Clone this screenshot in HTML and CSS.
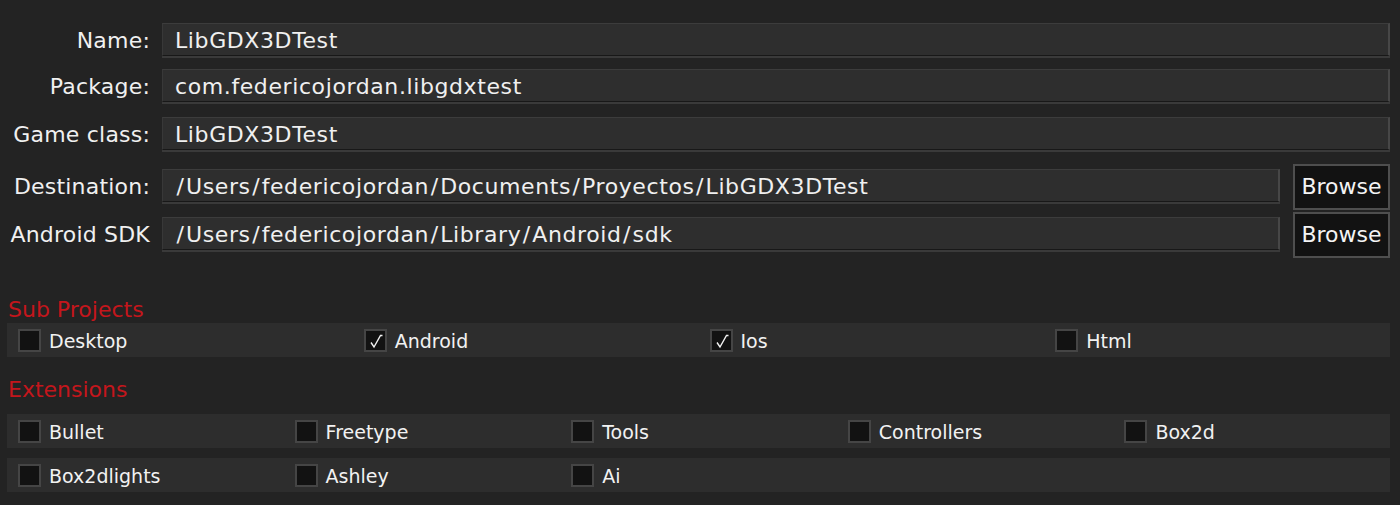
FILE: index.html
```html
<!DOCTYPE html>
<html>
<head>
<meta charset="utf-8">
<link rel="stylesheet" href="styles.css">
</head>
<body>
<div class="app">
  <div class="form">
    <div class="frow r-name">
      <div class="lbl">Name:</div>
      <div class="field">LibGDX3DTest</div>
    </div>
    <div class="frow r-pkg">
      <div class="lbl">Package:</div>
      <div class="field">com.federicojordan.libgdxtest</div>
    </div>
    <div class="frow r-game">
      <div class="lbl">Game class:</div>
      <div class="field">LibGDX3DTest</div>
    </div>
    <div class="frow r-dest browse-row">
      <div class="lbl">Destination:</div>
      <div class="field"><span class="sl">/</span>Users<span class="sl">/</span>federicojordan<span class="sl">/</span>Documents<span class="sl">/</span>Proyectos<span class="sl">/</span>LibGDX3DTest</div>
      <div class="btn">Browse</div>
    </div>
    <div class="frow r-sdk browse-row">
      <div class="lbl">Android SDK</div>
      <div class="field"><span class="sl">/</span>Users<span class="sl">/</span>federicojordan<span class="sl">/</span>Library<span class="sl">/</span>Android<span class="sl">/</span>sdk</div>
      <div class="btn">Browse</div>
    </div>
  </div>

  <div class="section-title sub-title">Sub Projects</div>
  <div class="crow cols4">
    <div class="check"><span class="box"></span><span class="ctext">Desktop</span></div>
    <div class="check"><span class="box on"><svg viewBox="0 0 19 19" width="19" height="19"><path d="M5 11.5 L8 16 L14.5 4.5 L16.5 4.5" fill="none" stroke="#f2f2f2" stroke-width="1.4"/></svg></span><span class="ctext">Android</span></div>
    <div class="check"><span class="box on"><svg viewBox="0 0 19 19" width="19" height="19"><path d="M5 11.5 L8 16 L14.5 4.5 L16.5 4.5" fill="none" stroke="#f2f2f2" stroke-width="1.4"/></svg></span><span class="ctext">Ios</span></div>
    <div class="check"><span class="box"></span><span class="ctext">Html</span></div>
  </div>

  <div class="section-title ext-title">Extensions</div>
  <div class="crow cols5">
    <div class="check"><span class="box"></span><span class="ctext">Bullet</span></div>
    <div class="check"><span class="box"></span><span class="ctext">Freetype</span></div>
    <div class="check"><span class="box"></span><span class="ctext">Tools</span></div>
    <div class="check"><span class="box"></span><span class="ctext">Controllers</span></div>
    <div class="check"><span class="box"></span><span class="ctext">Box2d</span></div>
  </div>
  <div class="crow cols5 second">
    <div class="check"><span class="box"></span><span class="ctext">Box2dlights</span></div>
    <div class="check"><span class="box"></span><span class="ctext">Ashley</span></div>
    <div class="check"><span class="box"></span><span class="ctext">Ai</span></div>
    <div class="check empty"></div>
    <div class="check empty"></div>
  </div>
</div>
</body>
</html>
```

FILE: styles.css
```css
html, body {
  margin: 0;
  padding: 0;
  background: #232323;
}
body {
  width: 1400px;
  height: 505px;
  overflow: hidden;
  font-family: "DejaVu Sans", "Liberation Sans", sans-serif;
  color: #f0f0f0;
}
.app {
  padding: 23px 10px 0 7px;
}
.form {
  display: flex;
  flex-direction: column;
}
.frow {
  display: flex;
  align-items: baseline;
}
.r-pkg { margin-top: 13px; }
.r-game { margin-top: 15px; }
.r-dest { margin-top: 14px; }
.r-sdk { margin-top: 2px; }

.lbl {
  width: 143px;
  flex: none;
  text-align: right;
  font-size: 22px;
  line-height: 26px;
  letter-spacing: 0.2px;
  margin-right: 12px;
  white-space: nowrap;
}
.field {
  flex: 1;
  height: 28px;
  box-sizing: content-box;
  background: #2e2e2e;
  border-top: 1px solid #3c3c3c;
  border-left: 1px solid #383838;
  border-right: 2px solid #474747;
  border-bottom: 1px solid #181818;
  box-shadow: 0 2px 0 #3a3a3a;
  font-size: 22px;
  line-height: 28px;
  letter-spacing: 0.6px;
  padding: 3px 0 0 12px;
  white-space: nowrap;
  overflow: hidden;
}
.sl {
  margin: 0 1.5px;
}
.browse-row .field {
  margin-right: 13px;
}
.btn {
  flex: none;
  width: 93px;
  height: 42px;
  background: #121212;
  border: 2px solid #4e4e4e;
  font-size: 22px;
  line-height: 42px;
  text-align: center;
  color: #f4f4f4;
}

.section-title {
  color: #c4161c;
  font-size: 22px;
  line-height: 26px;
  padding-left: 1px;
}
.sub-title { margin-top: 39px; }
.ext-title { margin-top: 20px; margin-bottom: 11px; }

.crow {
  display: grid;
  height: 34px;
  background: #2d2d2d;
  align-items: center;
}
.cols4 { grid-template-columns: repeat(4, 1fr); }
.cols5 { grid-template-columns: repeat(5, 1fr); }
.crow.second { margin-top: 10px; }

.check {
  display: flex;
  align-items: center;
  padding-left: 11px;
}
.box {
  width: 19px;
  height: 19px;
  background: #121212;
  border: 2px solid #454545;
  flex: none;
  display: flex;
  align-items: center;
  justify-content: center;
}
.ctext {
  font-size: 19px;
  line-height: 22px;
  margin-left: 8px;
  margin-top: 1px;
  color: #f2f2f2;
}
```
